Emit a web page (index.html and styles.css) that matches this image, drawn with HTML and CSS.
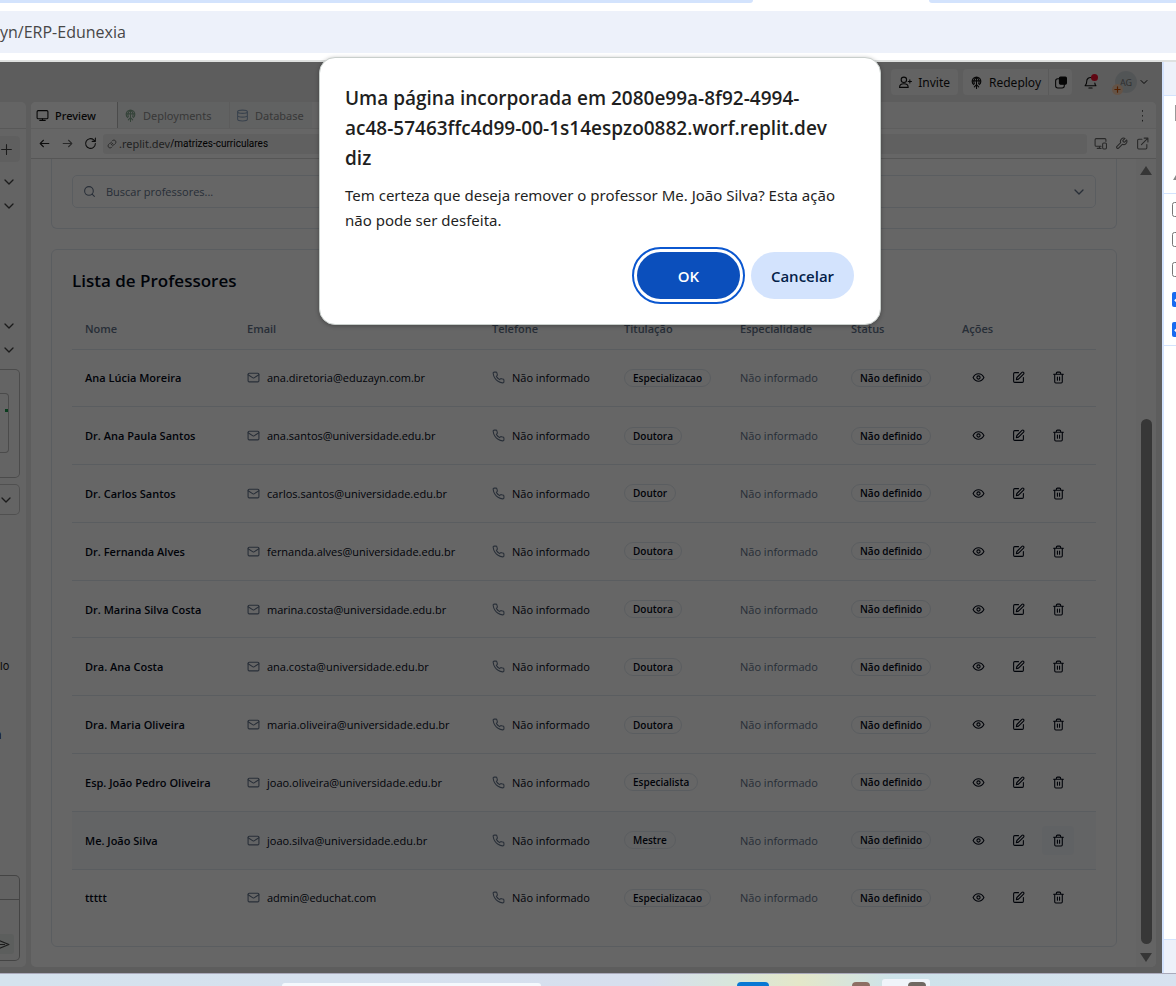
FILE: index.html
```
<!DOCTYPE html>
<html lang="pt"><head><meta charset="utf-8"><title>ERP-Edunexia</title><link rel="stylesheet" href="styles.css"></head>
<body>
<svg class="defs" aria-hidden="true">
<symbol id="mail" viewBox="0 0 24 24"><rect x="2" y="4" width="20" height="16" rx="2"/><path d="m22 7-8.97 5.7a1.94 1.94 0 0 1-2.06 0L2 7"/></symbol>
<symbol id="phone" viewBox="0 0 24 24"><path d="M22 16.92v3a2 2 0 0 1-2.18 2 19.79 19.79 0 0 1-8.63-3.07 19.5 19.5 0 0 1-6-6 19.79 19.79 0 0 1-3.07-8.67A2 2 0 0 1 4.11 2h3a2 2 0 0 1 2 1.72c.13.96.36 1.9.7 2.81a2 2 0 0 1-.45 2.11L8.09 9.91a16 16 0 0 0 6 6l1.27-1.27a2 2 0 0 1 2.11-.45c.91.34 1.85.57 2.81.7A2 2 0 0 1 22 16.92z"/></symbol>
<symbol id="eye" viewBox="0 0 24 24"><path d="M2 12s3.500-7 10-7 10 7 10 7-3.500 7-10 7-10-7-10-7z"/><circle cx="12" cy="12" r="3"/></symbol>
<symbol id="edit" viewBox="0 0 24 24"><path d="M12 3H5a2 2 0 0 0-2 2v14a2 2 0 0 0 2 2h14a2 2 0 0 0 2-2v-7"/><path d="M18.400 2.600a2.100 2.100 0 0 1 3 3L12 15l-4 1 1-4z"/></symbol>
<symbol id="trash" viewBox="0 0 24 24"><path d="M3 6h18M19 6v14a2 2 0 0 1-2 2H7a2 2 0 0 1-2-2V6M8 6V4a2 2 0 0 1 2-2h4a2 2 0 0 1 2 2v2M10 11v6M14 11v6"/></symbol>
<symbol id="chev" viewBox="0 0 24 24"><path d="m6 9 6 6 6-6"/></symbol>
<symbol id="search" viewBox="0 0 24 24"><circle cx="11" cy="11" r="8"/><path d="m21 21-4.300-4.300"/></symbol>
<symbol id="monitor" viewBox="0 0 24 24"><rect x="2" y="3" width="20" height="15" rx="2"/><path d="M7 21h10M12 18v3"/></symbol>
<symbol id="deploy" viewBox="0 0 24 24"><path d="M7 16a8 8 0 1 1 10 0M12 2v21M8 20l4-4 4 4M4 9h16M8 14c-2-5 0-9 4-12 4 3 6 7 4 12"/></symbol>
<symbol id="db" viewBox="0 0 24 24"><ellipse cx="12" cy="5" rx="9" ry="3"/><path d="M3 5v14c0 4 18 4 18 0V5M3 12c0 4 18 4 18 0"/></symbol>
<symbol id="left" viewBox="0 0 24 24"><path d="M20 12H4M10 6l-6 6 6 6"/></symbol>
<symbol id="right" viewBox="0 0 24 24"><path d="M4 12h16M14 6l6 6-6 6"/></symbol>
<symbol id="reload" viewBox="0 0 24 24"><path d="M21 12a9 9 0 1 1-3-6.700L21 8M21 2v6h-6"/></symbol>
<symbol id="link" viewBox="0 0 24 24"><path d="M10 13a5 5 0 0 0 7.500.5l3-3a5 5 0 0 0-7-7L12 5M14 11a5 5 0 0 0-7.500-.5l-3 3a5 5 0 0 0 7 7L12 19"/></symbol>
<symbol id="plus" viewBox="0 0 24 24"><path d="M12 3v18M3 12h18"/></symbol>
<symbol id="invite" viewBox="0 0 24 24"><circle cx="9" cy="7" r="5"/><path d="M1 21c0-9 16-9 16 0zM20 7v6M17 10h6"/></symbol>
<symbol id="window" viewBox="0 0 24 24"><rect x="3" y="5" width="16" height="17" rx="4"/><rect x="10" y="2" width="13" height="13" rx="2" fill="currentColor"/></symbol>
<symbol id="bell" viewBox="0 0 24 24"><path d="M14 3a7 7 0 0 0-9 7c0 5-2 6-3 8h20c-1-1-2-3-2-5M9 22h6"/></symbol>
<symbol id="devices" viewBox="0 0 24 24"><path d="M13 17H4a2 2 0 0 1-2-2V5a2 2 0 0 1 2-2h16a2 2 0 0 1 2 2v3M6 21h7M10 17v4"/><rect x="16" y="11" width="7" height="11" rx="2"/></symbol>
<symbol id="wrench" viewBox="0 0 24 24"><path d="M14.700 6.300a1 1 0 0 0 0 1.400l1.600 1.600a1 1 0 0 0 1.400 0l3.770-3.770a6 6 0 0 1-7.940 7.940l-6.910 6.910a2.120 2.120 0 0 1-3-3l6.910-6.910a6 6 0 0 1 7.940-7.940z"/></symbol>
<symbol id="open" viewBox="0 0 24 24"><path d="M11 4H5a2 2 0 0 0-2 2v14a2 2 0 0 0 2 2h13a2 2 0 0 0 2-2v-6M15 2h7v7M22 2 10 14"/></symbol>
<symbol id="dots" viewBox="0 0 24 24"><path d="M12 3v1M12 12v1M12 21v1"/></symbol>
<symbol id="send" viewBox="0 0 24 24"><path d="M2 4l20 8-20 8 3-8zM5 12h9"/></symbol>
</svg>
<header class="browser">
 <div class="tabs"><span class="tab-end"></span><span class="tab-next"></span></div>
 <div class="address">yn/ERP-Edunexia</div>
</header>
<main class="workspace">
 <section class="app">
  <div class="topbar">
   <button class="find" aria-label="Pesquisar"><svg><use href="#search"/></svg></button>
   <button class="pill"><svg><use href="#invite"/></svg>Invite</button>
   <div class="split"><button class="pill deploy"><svg><use href="#deploy"/></svg>Redeploy</button><button class="pill mini" aria-label="Janelas"><svg><use href="#window"/></svg></button></div>
   <button class="bell" aria-label="Notificações"><svg><use href="#bell"/></svg><i></i></button>
   <button class="account"><span class="avatar">AG<i><svg><use href="#plus"/></svg></i></span><svg><use href="#chev"/></svg></button>
  </div>
  <div class="panes">
   <aside class="chat">
    <div class="chat-head"></div>
    <button class="add" aria-label="Adicionar"><svg><use href="#plus"/></svg></button>
    <div class="chevs first"><svg><use href="#chev"/></svg><svg><use href="#chev"/></svg></div>
    <div class="chevs second"><svg><use href="#chev"/></svg><svg><use href="#chev"/></svg></div>
    <div class="preview-card"><div class="thumb"><i></i></div></div>
    <div class="history"><svg><use href="#chev"/></svg></div>
    <p class="frag one">lo</p><p class="frag two">n</p>
    <div class="composer"><div class="composer-head"></div><button aria-label="Enviar"><svg><use href="#send"/></svg></button></div>
   </aside>
   <section class="preview">
    <nav class="ptabs"><button class="ptab on"><svg><use href="#monitor"/></svg>Preview</button><button class="ptab green"><svg><use href="#deploy"/></svg>Deployments</button><button class="ptab blue"><svg><use href="#db"/></svg>Database</button><button class="more" aria-label="Mais"><svg><use href="#dots"/></svg></button></nav>
    <div class="urlbar"><button aria-label="Voltar"><svg><use href="#left"/></svg></button><button class="dim" aria-label="Avançar"><svg><use href="#right"/></svg></button><button aria-label="Recarregar"><svg><use href="#reload"/></svg></button><div class="url"><svg><use href="#link"/></svg><span>.replit.dev</span><b>/matrizes-curriculares</b></div><div class="tools dim"><button aria-label="Dispositivos"><svg><use href="#devices"/></svg></button><button aria-label="Ferramentas"><svg><use href="#wrench"/></svg></button><button aria-label="Abrir"><svg><use href="#open"/></svg></button></div></div>
    <div class="frame">
     <div class="content">
      <div class="card filter"><label class="search"><svg><use href="#search"/></svg><input placeholder="Buscar professores..." aria-label="Buscar professores"></label><button class="select" aria-label="Filtro"><svg><use href="#chev"/></svg></button></div>
      <div class="card list"><h2>Lista de Professores</h2>
       <table><colgroup><col class="c1"><col class="c2"><col class="c3"><col class="c4"><col class="c5"><col class="c6"><col></colgroup><thead><tr><th>Nome</th><th>Email</th><th>Telefone</th><th>Titulação</th><th>Especialidade</th><th>Status</th><th>Ações</th></tr></thead><tbody id="rows"></tbody></table>
      </div>
     </div>
     <div class="scroll"><i class="up"></i><i class="thumbbar"></i><i class="down"></i></div>
    </div>
   </section>
  </div>
  <div class="backdrop"></div>
 </section>
 <aside class="devtools"><div class="dt-head"></div><div class="dt-body"><span class="dt-letter"></span><span class="dt-tri"></span></div><div class="dt-checks"><input type="checkbox" aria-label="Opção 1"><input type="checkbox" aria-label="Opção 2"><input type="checkbox" aria-label="Opção 3"><input type="checkbox" checked aria-label="Opção 4"><input type="checkbox" checked aria-label="Opção 5"></div><div class="dt-foot"></div></aside>
 <div class="dialog" role="dialog" aria-modal="true" aria-labelledby="dlg"><h1 id="dlg">Uma página incorporada em 2080e99a-8f92-4994-<br>ac48-57463ffc4d99-00-1s14espzo0882.worf.replit.dev<br>diz</h1><p>Tem certeza que deseja remover o professor Me. João Silva? Esta ação<br>não pode ser desfeita.</p><div class="actions"><button class="ok">OK</button><button class="cancel">Cancelar</button></div></div>
</main>
<footer class="taskbar"><span class="task-search"></span><span class="task-blue"></span><span class="task-brown"></span><span class="task-active"><i></i></span></footer>
<script src="rows.js"></script>
</body></html>
```
FILE: rows.js
```
const people = [
  ["Ana Lúcia Moreira", "ana.diretoria@eduzayn.com.br", "Especializacao"],
  ["Dr. Ana Paula Santos", "ana.santos@universidade.edu.br", "Doutora"],
  ["Dr. Carlos Santos", "carlos.santos@universidade.edu.br", "Doutor"],
  ["Dr. Fernanda Alves", "fernanda.alves@universidade.edu.br", "Doutora"],
  ["Dr. Marina Silva Costa", "marina.costa@universidade.edu.br", "Doutora"],
  ["Dra. Ana Costa", "ana.costa@universidade.edu.br", "Doutora"],
  ["Dra. Maria Oliveira", "maria.oliveira@universidade.edu.br", "Doutora"],
  ["Esp. João Pedro Oliveira", "joao.oliveira@universidade.edu.br", "Especialista"],
  ["Me. João Silva", "joao.silva@universidade.edu.br", "Mestre"],
  ["ttttt", "admin@educhat.com", "Especializacao"]
];
const icon = id => `<svg><use href="#${id}"/></svg>`;
document.getElementById("rows").innerHTML = people.map(([name, email, degree]) => `
<tr class="${name === "Me. João Silva" ? "hover" : ""}">
<td class="name">${name}</td>
<td><div class="info">${icon("mail")}${email}</div></td>
<td><div class="info">${icon("phone")}Não informado</div></td>
<td><span class="badge">${degree}</span></td>
<td class="muted">Não informado</td>
<td><span class="badge">Não definido</span></td>
<td><div class="acts"><button aria-label="Ver">${icon("eye")}</button><button aria-label="Editar">${icon("edit")}</button><button class="del" aria-label="Remover">${icon("trash")}</button></div></td>
</tr>`).join("");
```
FILE: styles.css
```
* { box-sizing: border-box; }
html, body { height: 100%; }
body { margin: 0; display: flex; flex-direction: column; overflow: hidden; background: #fff; font-family: "Open Sans", "Noto Sans", sans-serif; }
button { font: inherit; color: inherit; border: 0; background: none; padding: 0; display: flex; align-items: center; justify-content: center; }
svg { width: 13px; height: 13px; flex: none; fill: none; stroke: currentColor; stroke-width: 2; stroke-linecap: round; stroke-linejoin: round; }
.defs { display: none; }
h1, h2, p { margin: 0; }

.browser { flex: none; display: flex; flex-direction: column; gap: 8px; border-bottom: 2px solid #dfe1e0; padding-bottom: 7px; }
.tabs { height: 3px; display: flex; justify-content: space-between; }
.tab-end { width: 64%; background: #d3e3fd; border-bottom-right-radius: 12px; }
.tab-next { width: 21%; background: #d3e3fd; border-bottom-left-radius: 12px; }
.address { height: 42px; background: #edf1fa; display: flex; align-items: center; color: #474747; font-size: 16px; }

.workspace { position: relative; flex: 1; min-height: 0; display: flex; }
.app { position: relative; flex: 1; min-width: 0; display: flex; flex-direction: column; background: #e9e9e9; font-family: Inter, sans-serif; }
.backdrop { position: absolute; inset: 0; background: rgba(0, 0, 0, .6); }
.topbar { height: 40px; flex: none; display: flex; justify-content: flex-end; align-items: center; padding-right: 12px; font-size: 12px; font-family: "Noto Sans", sans-serif; color: #111; }
.find { margin-right: 13px; }
.pill { height: 26px; background: #f7f7f7; border-radius: 4px; gap: 6px; padding: 0 8px; }
.split { display: flex; margin: 0 10px 0 5px; }
.deploy { border-radius: 4px 0 0 4px; border-right: 1px solid #e0e0e0; padding: 0 7px; }
.mini { border-radius: 0 4px 4px 0; padding: 0 5px; }
.bell { position: relative; width: 16px; margin-right: 17px; }
.bell i { position: absolute; right: 0; top: -2px; width: 7px; height: 7px; border-radius: 50%; background: #f01030; }
.account { gap: 1px; }
.account > svg { width: 12px; height: 12px; }
.avatar { position: relative; width: 22px; height: 22px; border-radius: 50%; background: #ced4d8; color: #777; font-size: 9px; display: flex; align-items: center; justify-content: center; }
.avatar i { position: absolute; left: -3px; bottom: -2px; width: 11px; height: 11px; border-radius: 50%; background: #f9cfb0; color: #d05000; display: flex; padding: 2px; }
.avatar i svg { width: 7px; height: 7px; stroke-width: 4; }

.panes { flex: 1; min-height: 0; display: flex; gap: 5px; padding: 0 6px 6px 0; }
.chat { width: 26px; flex: none; background: #fbfbfb; border-radius: 0 5px 5px 0; display: flex; flex-direction: column; overflow: hidden; color: #444; }
.chat-head { height: 27px; flex: none; border-bottom: 1px solid #ddd; }
.add { width: 20px; height: 26px; margin-top: 7px; background: #eee; border-radius: 0 4px 4px 0; flex: none; justify-content: flex-start; }
.chevs { display: flex; flex-direction: column; gap: 8px; padding-left: 1px; flex: none; }
.chevs svg, .history svg { width: 16px; height: 16px; }
.first { margin-top: 12px; }
.second { margin-top: 104px; }
.preview-card { flex: none; width: 20px; height: 109px; margin-top: 11px; border: 1px solid #bbb; border-left: 0; border-radius: 0 5px 5px 0; padding-top: 23px; }
.thumb { width: 9px; height: 60px; border: 1px solid #bbb; border-left: 0; border-radius: 0 4px 4px 0; display: flex; justify-content: flex-end; padding-top: 15px; }
.thumb i { width: 3px; height: 3px; background: #199a4c; }
.history { flex: none; width: 20px; height: 31px; margin-top: 6px; border: 1px solid #c8c8c8; border-left: 0; border-radius: 0 5px 5px 0; display: flex; align-items: center; justify-content: flex-end; padding-right: 5px; }
.frag { font-size: 11px; line-height: 16px; color: #222; flex: none; }
.one { margin-top: 143px; }
.two { margin-top: 53px; margin-left: -5px; }
.composer { flex: none; width: 20px; height: 86px; margin-top: auto; margin-bottom: 6px; border: 1px solid #aaa; border-left: 0; border-radius: 0 5px 5px 0; background: #f4f4f4; display: flex; flex-direction: column; justify-content: space-between; padding-bottom: 6px; }
.composer-head { height: 24px; border-bottom: 1px solid #aaa; }
.composer button { width: 14px; height: 20px; background: #e6ebe8; border-radius: 0 3px 3px 0; color: #444; justify-content: flex-end; padding-right: 4px; }

.preview { flex: 1; min-width: 0; display: flex; flex-direction: column; background: #fff; border-radius: 5px; overflow: hidden; }
.ptabs { height: 27px; flex: none; display: flex; background: #fafafa; border-bottom: 1px solid #ececec; font-size: 11px; font-family: "Noto Sans", sans-serif; color: #8d8d8d; }
.ptab { gap: 6px; padding: 0 8px 0 6px; background: #f3f5f5; }
.ptab.on { width: 87px; justify-content: flex-start; background: #fff; color: #111; border-right: 1px solid #bbb; padding-left: 5px; font-weight: 500; }
.green { width: 112px; justify-content: flex-start; border-right: 1px solid #e6e6e6; }
.green svg { color: #85a890; }
.blue svg { color: #8fa5c0; }
.more { margin-left: auto; width: 28px; color: #444; }
.urlbar { height: 30px; flex: none; display: flex; align-items: center; gap: 10px; padding: 0 7px; border-bottom: 1px solid #d8d8d8; color: #222; font-size: 11px; font-family: "Noto Sans", sans-serif; }
.dim { color: #666; }
.tools { display: flex; gap: 8px; margin-left: -3px; }
.url { flex: 1; height: 20px; display: flex; align-items: center; background: #f1f1f1; border-radius: 3px; padding-left: 4px; color: #555; margin-left: -4px; }
.url svg { width: 10px; height: 10px; margin-right: 2px; }
.url b { font-weight: 400; color: #000; font-size: 10px; font-family: Roboto, sans-serif; }

.frame { flex: 1; min-height: 0; display: flex; }
.content { flex: 1; min-width: 0; padding: 0 19px 20px 20px; font-family: "Open Sans", "Noto Sans", sans-serif; font-size: 11px; color: #020817; display: flex; flex-direction: column; gap: 20px; }
.card { border: 1px solid #e2e8f0; border-radius: 6px; padding: 0 20px; }
.filter { border-top: 0; border-radius: 0 0 6px 6px; height: 70px; padding-top: 16px; display: grid; grid-template-columns: 1fr 1fr; gap: 14px; flex: none; }
.search, .select { height: 33px; border: 1px solid #e2e8f0; border-radius: 5px; display: flex; align-items: center; color: #64748b; }
.search { padding-left: 10px; gap: 10px; }
.search input { border: 0; outline: 0; background: none; font: inherit; padding: 0; flex: 1; min-width: 0; }
.search input::placeholder { color: #64748b; }
.select { justify-content: flex-end; padding-right: 8px; }
.select svg { width: 16px; height: 16px; }
.list { flex: 1; min-height: 0; padding-top: 18px; }
h2 { font-size: 17px; line-height: 26px; font-weight: 600; }
table { width: 100%; height: 617px; margin-top: 15px; border-collapse: collapse; table-layout: fixed; }
.c1 { width: 162px; } .c2 { width: 245px; } .c3 { width: 132px; } .c4 { width: 116px; } .c5 { width: 111px; } .c6 { width: 111px; }
th, td { text-align: left; padding: 0 0 0 13px; white-space: nowrap; }
th { height: 40px; color: #64748b; font-weight: 600; }
tr { border-bottom: 1px solid #e2e8f0; }
tbody tr:last-child { border-bottom: 0; }
.name { font-weight: 600; }
.info { display: flex; align-items: center; gap: 7px; }
.info svg { color: #64748b; }
.badge { display: inline-flex; align-items: center; height: 18px; border: 1px solid #e2e8f0; border-radius: 9px; padding: 0 8px; font-size: 10px; font-weight: 600; vertical-align: middle; }
.muted { color: #64748b; }
.hover { background: #f8fafc; }
.acts { display: flex; gap: 8px; }
.acts button { width: 32px; height: 29px; border-radius: 4px; }
.hover .del { background: #f1f5f9; }
.scroll { width: 20px; flex: none; display: flex; flex-direction: column; align-items: center; padding: 7px 0 5px; background: #fafafa; }
.up, .down { border: 6px solid transparent; }
.up { border-top: 0; border-bottom: 9px solid #888; }
.down { border-bottom: 0; border-top: 9px solid #888; }
.thumbbar { width: 11px; height: 66%; margin-top: auto; margin-bottom: 9px; border-radius: 6px; background: #8a8a8a; }

.devtools { width: 14px; flex: none; border-left: 2px solid #d3e3fd; background: #fff; display: flex; flex-direction: column; overflow: hidden; }
.dt-head { height: 34px; background: #edf1fa; border-bottom: 1px solid #d3e3fd; }
.dt-body { height: 98px; border-bottom: 1px solid #d3e3fd; display: flex; flex-direction: column; align-items: flex-end; justify-content: space-between; padding: 9px 0 13px; }
.dt-letter { width: 1px; height: 16px; background: #999; }
.dt-tri { width: 3px; height: 5px; background: #888; clip-path: polygon(100% 0, 100% 100%, 0 100%); }
.dt-checks { height: 152px; padding: 8px 0 0 8px; border-bottom: 1px solid #d3e3fd; display: flex; flex-direction: column; gap: 15px; }
.dt-checks input { width: 15px; height: 15px; margin: 0; flex: none; accent-color: #1a6bf0; }
.dt-foot { margin-top: auto; height: 34px; background: #edf1fa; border-top: 1px solid #d3e3fd; }

.dialog { position: absolute; top: -5px; left: 50%; margin-left: -269px; width: 562px; border: 1px solid #c9cfcc; border-radius: 16px; background: #fff; padding: 25px 26px 25px 25px; color: #1f1f1f; box-shadow: 0 1px 4px rgba(0, 0, 0, .3); }
h1 { font-size: 19px; line-height: 30px; font-weight: 600; white-space: nowrap; }
.dialog p { font-family: "Noto Sans", sans-serif; font-size: 15px; line-height: 25px; margin-top: 10px; white-space: nowrap; }
.actions { display: flex; justify-content: flex-end; gap: 11px; margin-top: 19px; }
.actions button { width: 103px; height: 47px; border-radius: 24px; font-size: 15px; font-weight: 600; }
.ok { background: #0b4fbc; color: #fff; outline: 2px solid #0b57d0; outline-offset: 3px; }
.cancel { background: #d3e3fd; color: #041e49; }

.taskbar { height: 13px; flex: none; border-top: 1px solid #aab; background: linear-gradient(90deg, #d5e3ee, #d7dfee 55%, #d8e6dc 62%, #e4e7c9 68%, #cde3ea 76%, #d8e2f0); display: grid; grid-template-columns: 24% 22% 16% 4% 6% 2% 1% 5%; align-items: end; overflow: hidden; }
.task-search { grid-column: 2; height: 3px; background: #f5f9fd; border-radius: 9px 9px 0 0; }
.task-blue { grid-column: 4; width: 32px; height: 4px; background: #0878d4; border-radius: 9px 9px 0 0; justify-self: center; }
.task-brown { grid-column: 6; width: 18px; height: 4px; background: #8d6e63; border-radius: 9px 9px 0 0; justify-self: end; }
.task-active { grid-column: 8; width: 48px; height: 7px; background: #f0f4fa; border-radius: 3px 3px 0 0; display: flex; justify-content: flex-end; align-items: end; padding-right: 4px; }
.task-active i { width: 18px; height: 4px; background: #706963; border-radius: 9px 9px 0 0; }
```
